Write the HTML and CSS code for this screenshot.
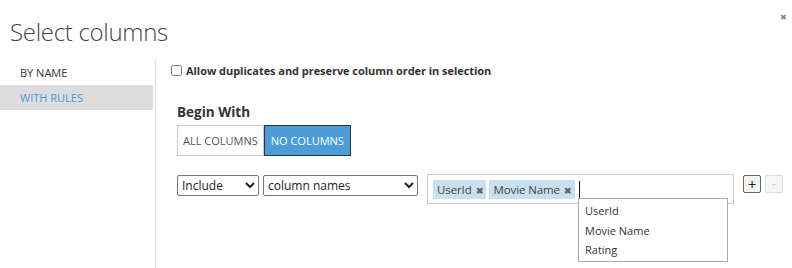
FILE: index.html
```html
<!DOCTYPE html>
<html lang="en">
<head>
  <meta charset="UTF-8" />
  <title>Select columns</title>
  <link rel="stylesheet" href="styles.css">
</head>
<body>

  <div class="dialog">
    <header>
      <h1>Select columns</h1>
      <button class="close">&#x2716;</button>
    </header>

    <div class="panes">
      <nav class="sidebar">
        <a href="#">BY NAME</a>
        <a href="#" class="active">WITH RULES</a>
      </nav>

      <main class="content">
        <label class="check">
          <input type="checkbox">
          <span>Allow duplicates and preserve column order in selection</span>
        </label>

        <h2>Begin With</h2>
        <div class="toggle">
          <button>ALL COLUMNS</button>
          <button class="on">NO COLUMNS</button>
        </div>

        <div class="rule">
          <select class="sel-mode"><option>Include</option></select>
          <select class="sel-kind"><option>column names</option></select>

          <div class="tagbox">
            <span class="tag">UserId <b>&#x2716;</b></span>
            <span class="tag">Movie Name <b>&#x2716;</b></span>
            <span class="caret"></span>
            <ul class="suggest">
              <li>UserId</li>
              <li>Movie Name</li>
              <li>Rating</li>
            </ul>
          </div>

          <button class="small">+</button>
          <button class="small" disabled>-</button>
        </div>
      </main>
    </div>
  </div>

</body>
</html>
```

FILE: styles.css
```css
* { box-sizing: border-box; }

body {
  margin: 0;
  font-family: 'Open Sans', 'Noto Sans', sans-serif;
  background: white;
  color: #333;
  width: 792px;
  height: 268px;
  overflow: hidden;
}

header {
  display: flex;
  justify-content: space-between;
  align-items: flex-start;
  height: 60px;
}

header h1 {
  margin: 15px 0 0 10px;
  font-size: 24px;
  font-weight: 300;
  color: #444;
  letter-spacing: -0.3px;
}

.close {
  background: none;
  border: none;
  color: #888;
  font-size: 8px;
  margin: 13px 5px 0 0;
  padding: 0;
  cursor: pointer;
}

.panes {
  display: flex;
  height: 208px;
}

.sidebar {
  width: 156px;
  border-right: 1px solid #ddd;
  display: flex;
  flex-direction: column;
  padding-right: 2px;
}

.sidebar a {
  display: block;
  height: 25px;
  line-height: 25px;
  padding-left: 20px;
  font-size: 11px;
  color: #333;
  text-decoration: none;
}

.sidebar a.active {
  background: #dddddd;
  color: #4a98d8;
}

.content {
  flex: 1;
  padding: 2px 0 0 15px;
}

.check {
  display: flex;
  align-items: center;
  gap: 4px;
  font-size: 11px;
  font-weight: bold;
  height: 16px;
  letter-spacing: -0.05px;
}

.check input {
  margin: 0;
  width: 11px;
  height: 11px;
}

h2 {
  margin: 25px 0 4px 6px;
  font-size: 13.5px;
  font-weight: bold;
  color: #333;
}

.toggle {
  display: flex;
  margin-left: 6px;
}

.toggle button {
  height: 31px;
  padding: 0 5px;
  border: 1px solid #ccc;
  background: white;
  color: #555;
  font-family: inherit;
  font-size: 11px;
}

.toggle button.on {
  background: #4a9dd8;
  border-color: #333;
  color: white;
  padding: 0 6px;
}

.rule {
  display: flex;
  align-items: flex-start;
  margin: 18px 0 0 6px;
}

.rule select {
  height: 21px;
  border: 1px solid #777;
  border-radius: 2px;
  font-family: inherit;
  font-size: 12px;
  color: #222;
  background: white;
  margin-top: 1px;
}

.sel-mode { width: 82px; margin-right: 4px; }
.sel-kind { width: 155px; margin-right: 9px; }

.tagbox {
  position: relative;
  width: 307px;
  height: 30px;
  border: 1px solid #ccc;
  display: flex;
  align-items: center;
  gap: 3px;
  padding-left: 5px;
}

.tag {
  background: #c9e1ef;
  height: 19px;
  line-height: 19px;
  padding: 0 3px 0 4px;
  font-size: 11.5px;
  color: #444;
  letter-spacing: -0.1px;
}

.tag b {
  color: #666;
  font-size: 9px;
  margin-left: 1px;
}

.caret {
  width: 1px;
  height: 17px;
  background: #111;
  margin-left: 1px;
}

.suggest {
  position: absolute;
  left: 150px;
  top: 23px;
  width: 150px;
  height: 64px;
  margin: 0;
  padding: 2px 0 0 6px;
  list-style: none;
  background: white;
  border: 1px solid #aaa;
  font-size: 11px;
  color: #333;
}

.suggest li {
  height: 19.5px;
  line-height: 20px;
}

.small {
  width: 18px;
  height: 18px;
  margin: 1px 0 0 9px;
  padding: 0;
  border: 1px solid #666;
  border-radius: 2px;
  background: #f4f4f4;
  font-size: 14px;
  line-height: 14px;
  color: #222;
}

.small + .small { margin-left: 4px; }

.small:disabled {
  border-color: #ddd;
  color: #ccc;
  background: #f6f6f6;
}
```
